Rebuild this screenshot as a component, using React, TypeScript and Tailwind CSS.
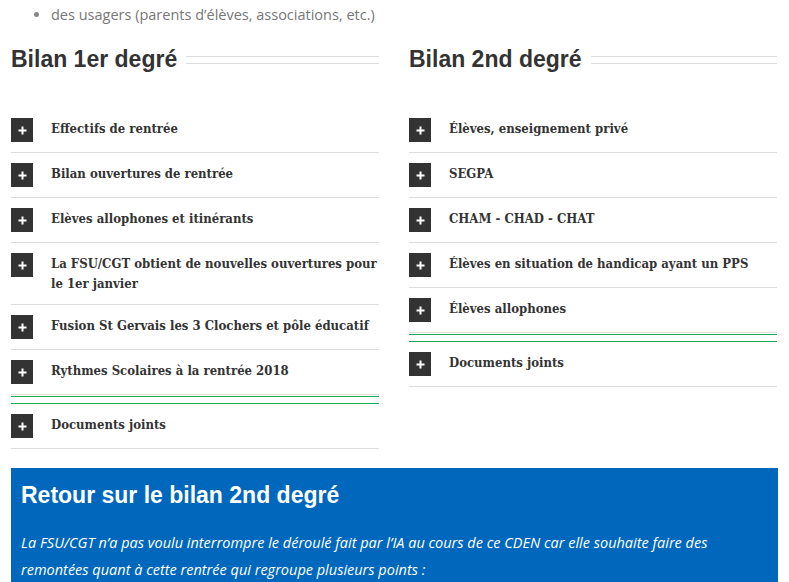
import React from 'react';

const premier = [
    'Effectifs de rentrée',
    'Bilan ouvertures de rentrée',
    'Elèves allophones et itinérants',
    'La FSU/CGT obtient de nouvelles ouvertures pour le 1er janvier',
    'Fusion St Gervais les 3 Clochers et pôle éducatif',
    'Rythmes Scolaires à la rentrée 2018',
];

const second = [
    'Élèves, enseignement privé',
    'SEGPA',
    'CHAM - CHAD - CHAT',
    'Élèves en situation de handicap ayant un PPS',
    'Élèves allophones',
];

function Plus() {
    return (
        <span className="w-[22px] h-[24px] bg-[#333] flex items-center justify-center shrink-0">
            <svg width="9" height="9" viewBox="0 0 9 9">
                <path d="M4.5 0.5v8M0.5 4.5h8" stroke="#fff" strokeWidth="2" />
            </svg>
        </span>
    );
}

function Row({ label }: { label: string }) {
    return (
        <div className="flex items-start gap-[18px] pt-[10px] pb-[10px] border-b border-[#ddd]">
            <Plus />
            <span className="mt-[1px] text-[13px] leading-[20px] font-bold text-[#333] font-['DejaVu_Serif_Condensed','DejaVu_Serif',serif] [font-stretch:condensed]">
                {label}
            </span>
        </div>
    );
}

function Column({ title, items }: { title: string; items: string[] }) {
    return (
        <div className="flex flex-col">
            <div className="flex items-center gap-[9px] h-[32px] mt-[17px]">
                <h2 className="text-[23px] leading-[32px] font-bold text-[#333] font-['Liberation_Sans',Arial,sans-serif] whitespace-nowrap">
                    {title}
                </h2>
                <div className="flex-1 h-[8px] border-y border-[#ddd] mt-[2px]" />
            </div>

            <div className="mt-[33px]">
                {items.map((it) => (
                    <Row key={it} label={it} />
                ))}
                <div className="mt-[1px] h-[8px] border-y border-[#1ea85c]" />
                <Row label="Documents joints" />
            </div>
        </div>
    );
}

export default function App() {
    return (
        <div className="w-[789px] h-[582px] overflow-hidden bg-white">
            <ul className="list-disc pl-[51px] pt-[4px] text-[14.5px] leading-[22px] text-[#777] font-['Open_Sans',sans-serif] marker:text-[#888]">
                <li>des usagers (parents d’élèves, associations, etc.)</li>
            </ul>

            <div className="px-[11px] grid grid-cols-[368px_368px] gap-x-[30px]">
                <Column title="Bilan 1er degré" items={premier} />
                <Column title="Bilan 2nd degré" items={second} />
            </div>

            {/* Retour bilan */}
            <div className="mx-[11px] mt-[19px] bg-[#0068bc] px-[10px] pt-[12px] pb-[20px]">
                <h3 className="text-[23px] leading-[30px] font-bold text-white font-['Liberation_Sans',Arial,sans-serif]">
                    Retour sur le bilan 2nd degré
                </h3>
                <p className="mt-[19px] text-[14.5px] leading-[27px] italic text-white font-['Open_Sans',sans-serif]">
                    La FSU/CGT n’a pas voulu interrompre le déroulé fait par l’IA au cours de ce CDEN car elle souhaite faire des remontées quant à cette rentrée qui regroupe plusieurs points :
                </p>
            </div>
        </div>
    );
}
